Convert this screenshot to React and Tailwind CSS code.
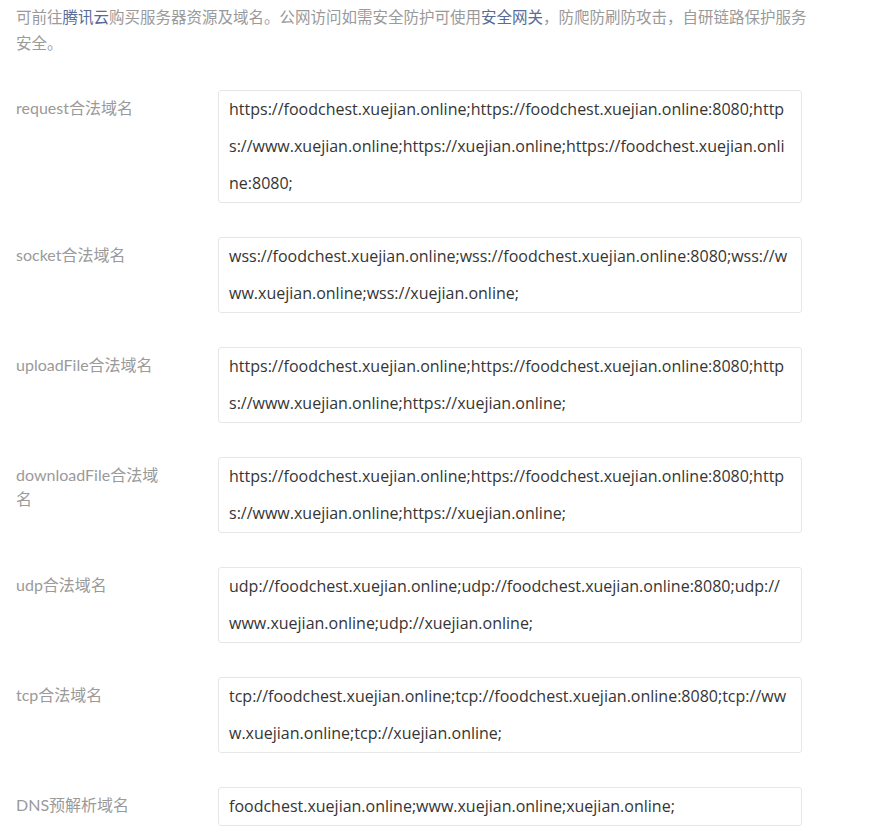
import React from "react";

const domains = [
  {
    label: "request合法域名",
    value:
      "https://foodchest.xuejian.online;https://foodchest.xuejian.online:8080;https://www.xuejian.online;https://xuejian.online;https://foodchest.xuejian.online:8080;",
  },
  {
    label: "socket合法域名",
    value:
      "wss://foodchest.xuejian.online;wss://foodchest.xuejian.online:8080;wss://www.xuejian.online;wss://xuejian.online;",
  },
  {
    label: "uploadFile合法域名",
    value:
      "https://foodchest.xuejian.online;https://foodchest.xuejian.online:8080;https://www.xuejian.online;https://xuejian.online;",
  },
  {
    label: "downloadFile合法域名",
    value:
      "https://foodchest.xuejian.online;https://foodchest.xuejian.online:8080;https://www.xuejian.online;https://xuejian.online;",
  },
  {
    label: "udp合法域名",
    value:
      "udp://foodchest.xuejian.online;udp://foodchest.xuejian.online:8080;udp://www.xuejian.online;udp://xuejian.online;",
  },
  {
    label: "tcp合法域名",
    value:
      "tcp://foodchest.xuejian.online;tcp://foodchest.xuejian.online:8080;tcp://www.xuejian.online;tcp://xuejian.online;",
  },
  {
    label: "DNS预解析域名",
    value: "foodchest.xuejian.online;www.xuejian.online;xuejian.online;",
  },
];

const App = () => {
  return (
    <div className="min-h-screen bg-white pl-4 font-['Lato','Noto_Sans_CJK_SC',sans-serif]">
      {/* Intro */}
      <p className="w-[800px] pt-1 text-[15.5px] leading-[26px] text-[#9a9a9a]">
        可前往<span className="text-[#576b95]">腾讯云</span>
        购买服务器资源及域名。公网访问如需安全防护可使用
        <span className="text-[#576b95]">安全网关</span>
        ，防爬防刷防攻击，自研链路保护服务安全。
      </p>

      {/* Domain rows */}
      <div className="mt-[34px] flex flex-col gap-[34px]">
        {domains.map((d) => (
          <div key={d.label} className="flex items-start">
            <div className="w-[202px] shrink-0 pt-[6px]">
              <div className="w-[152px] text-[16px] leading-[24px] text-[#9a9a9a]">
                {d.label}
              </div>
            </div>
            <div className="w-[584px] rounded-[3px] border border-[#e7e7eb] px-[10px] font-['Open_Sans','Noto_Sans_CJK_SC',sans-serif] text-[16px] leading-[37px] text-[#353535] break-all">
              {d.value}
            </div>
          </div>
        ))}
      </div>
    </div>
  );
};

export default App;
